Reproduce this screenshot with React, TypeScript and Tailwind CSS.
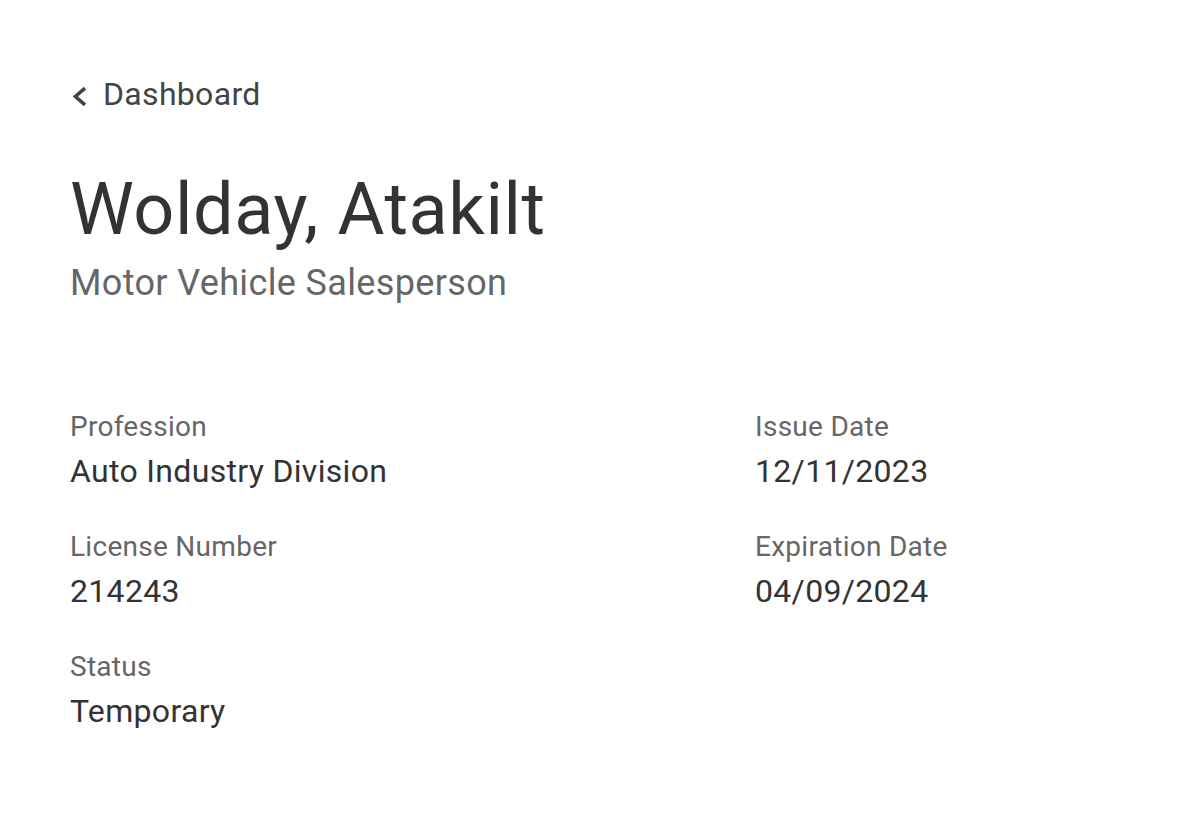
import React from "react";

function Field({ label, value }: { label: string; value: string }) {
  return (
    <div className="flex flex-col">
      <div className="text-[28px] leading-[36px] tracking-[0.01em] text-[#666666]">{label}</div>
      <div className="mt-[6px] text-[32px] leading-[40px] tracking-[0.01em] text-[#333333]">{value}</div>
    </div>
  );
}

export default function App() {
  return (
    <div
      className="min-h-[816px] w-full bg-white px-[70px] pt-[74px]"
      style={{ fontFamily: "Roboto, 'Noto Sans', sans-serif" }}
    >
      <div className="flex items-start text-[#444444]">
        <svg className="ml-[2px] mt-[12px]" width="15" height="21" viewBox="0 0 15 21" fill="none" stroke="#444444" strokeWidth="3.6" strokeLinecap="butt" strokeLinejoin="miter">
          <path d="M13 2.2 L3.4 10.5 L13 18.8" />
        </svg>
        <span className="ml-[16px] text-[32px] leading-[40px] tracking-[0.01em]">Dashboard</span>
      </div>
      <h1 className="mt-[54px] text-[72px] leading-[84px] tracking-[0.008em] text-[#333333]">Wolday, Atakilt</h1>
      <div className="mt-[9px] text-[36px] leading-[44px] tracking-[0.01em] text-[#666666]">Motor Vehicle Salesperson</div>
      <div className="mt-[104px] grid grid-cols-[685px_1fr] gap-y-[38px]">
        <Field label="Profession" value="Auto Industry Division" />
        <Field label="Issue Date" value="12/11/2023" />
        <Field label="License Number" value="214243" />
        <Field label="Expiration Date" value="04/09/2024" />
        <Field label="Status" value="Temporary" />
      </div>
    </div>
  );
}
